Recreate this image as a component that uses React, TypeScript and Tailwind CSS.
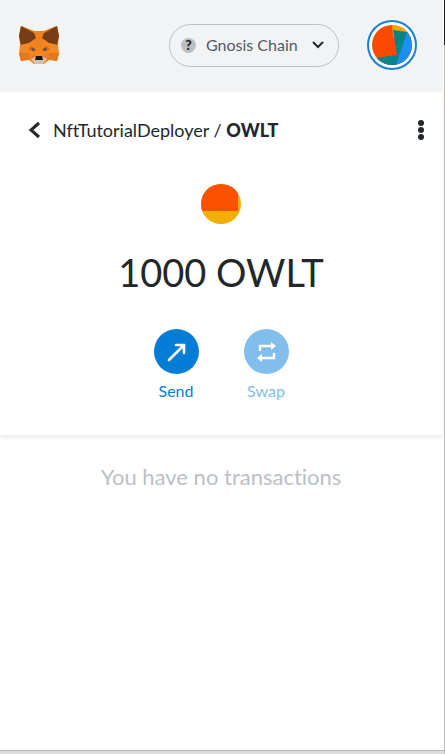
function Fox() {
  return (
    <svg viewBox="0 0 42 40" className="h-10 w-[42px]" aria-hidden="true">
      <path d="M3 1 16 6h10L39 1l2 10-1 9 1 9-2 7-8-1-5 4H16l-5-4-8 1-2-7 1-9-1-9Z" fill="#f6851b" />
      <path d="m3 1 13 5h10L39 1 26 10l-2 13h-6l-2-13Z" fill="#ee8120" />
      <path d="M3 1 16 8l2 5-7 5-8 2-2-9Z" fill="#763d16" />
      <path d="M39 1 26 8l-2 5 7 5 8 2 2-9Z" fill="#763d16" />
      <path d="m3 20 8-2-1 8-8 1Zm36 0-8-2 1 8 8 1Z" fill="#f08a2a" />
      <path d="M1 28h10l1 6-9 2Zm40 0H31l-1 6 9 2Z" fill="#e4761b" />
      <path d="m11 28 6 1-1 5-4 1Zm20 0-6 1 1 5 4 1Z" fill="#e9822a" />
      <path d="m10 24 4-3 4 3-1 3Zm22 0-4-3-4 3 1 3Z" fill="#d5671b" />
      <path d="m13 24 2-1 2 2-2 1Zm16 0-2-1-2 2 2 1Z" fill="#4a4f5c" />
      <path d="m13 34 4-2h8l4 2-4 5h-8Z" fill="#d7c1b3" />
      <path d="M18 31h6l1 4h-8Z" fill="#161616" />
    </svg>
  );
}

function AccountAvatar() {
  return (
    <svg viewBox="0 0 40 40" className="size-10 rounded-full" aria-hidden="true">
      <path d="M0 0h40v40H0Z" fill="#fa4900" />
      <path d="M20 0h20v12H21Z" fill="#f5a400" />
      <path d="m21 5 14 2 5 33H4l-1-7 22-3Z" fill="#03858a" />
      <path d="m35 7 5 0v33H24Z" fill="#1c8ff3" />
    </svg>
  );
}

function TokenAvatar() {
  return (
    <svg viewBox="0 0 40 40" className="size-10 rounded-full" aria-hidden="true">
      <path d="M0 0h40v40H0Z" fill="#f3af05" />
      <path d="M0 0h37v27H0Z" fill="#fc5200" />
      <path d="M0 24 5 36H0Z" fill="#f2123c" />
    </svg>
  );
}

export default function App() {
  return (
    <div className="flex min-h-screen bg-white font-['Lato','Open_Sans',sans-serif] text-[#24272a] [font-variant-ligatures:none]">
      <div className="flex grow flex-col">
        <header className="mr-px flex h-[92px] items-center bg-[#f2f3f4] pr-[26px] pb-0.5 pl-[18px]">
          <Fox />
          <button className="mr-7 ml-auto flex h-[43px] w-[170px] items-center rounded-full border border-[#bbc0c5] pr-3.5 pl-[11px] text-[#535a61]">
            <span className="flex size-[15px] items-center justify-center rounded-full bg-[#bbc0c5] text-sm leading-none font-black text-[#24272a]">?</span>
            <span className="ml-2.5 text-base">Gnosis Chain</span>
            <svg viewBox="0 0 12 8" className="ml-auto h-2 w-3" fill="none" stroke="#24272a" strokeWidth="2" aria-hidden="true">
              <path d="m1 1 5 5 5-5" />
            </svg>
          </button>
          <button aria-label="Account" className="flex size-[50px] items-center justify-center rounded-full border-2 border-[#1680d9] bg-white">
            <AccountAvatar />
          </button>
        </header>
        <main className="mr-0.5 flex grow flex-col">
          <section className="pb-8 shadow-[0_3px_4px_#00000014]">
            <nav className="flex h-[76px] items-center pr-[18px] pl-7">
              <button aria-label="Back">
                <svg viewBox="0 0 12 18" className="h-[18px] w-3" fill="none" stroke="#24272a" strokeWidth="3" aria-hidden="true">
                  <path d="m11 2-8 7 8 7" />
                </svg>
              </button>
              <p className="ml-[13px] text-lg">
                NftTutorialDeployer / <b className="font-black">OWLT</b>
              </p>
              <button aria-label="Token options" className="ml-auto">
                <svg viewBox="0 0 6 20" className="h-5 w-1.5" fill="#24272a" aria-hidden="true">
                  <circle cx="3" cy="3" r="3" />
                  <circle cx="3" cy="10" r="3" />
                  <circle cx="3" cy="17" r="3" />
                </svg>
              </button>
            </nav>
            <div className="mt-4 flex flex-col items-center">
              <TokenAvatar />
              <h1 className="mt-6 text-[38px] leading-12">1000 OWLT</h1>
              <div className="mt-[33px] flex gap-[45px]">
                <button className="flex w-[45px] flex-col items-center gap-[5px] text-base text-[#037dd6]">
                  <span className="flex size-[45px] items-center justify-center rounded-full bg-[#037dd6]">
                    <svg viewBox="0 0 20 20" className="size-5" fill="none" stroke="white" strokeWidth="2.6" strokeLinejoin="round" strokeLinecap="round" aria-hidden="true">
                      <path d="M3 18 18 3M10 3h8v8" />
                    </svg>
                  </span>
                  Send
                </button>
                <button disabled className="flex w-[45px] flex-col items-center gap-[5px] text-base text-[#81beeb]">
                  <span className="flex size-[45px] items-center justify-center rounded-full bg-[#81beeb]">
                    <svg viewBox="0 0 20 20" className="size-5" fill="none" stroke="white" strokeWidth="2.4" aria-hidden="true">
                      <path d="M4 9V4h12M18 11v5H4" />
                      <path d="m15 0 5 4-5 4ZM6 12l-5 4 5 4Z" fill="white" stroke="none" />
                    </svg>
                  </span>
                  Swap
                </button>
              </div>
            </div>
          </section>
          <p className="mt-7 text-center text-[22px] leading-7 text-[#bbc0c5]">You have no transactions</p>
        </main>
        <div className="h-1 border-t border-[#bbb] bg-[#dcdcde]" />
      </div>
      <div className="flex w-px flex-col bg-[#bdbdbd]">
        <span className="h-[45px] bg-[#161719]" />
        <span className="h-[60px] bg-[#bcb8ac]" />
      </div>
    </div>
  );
}
